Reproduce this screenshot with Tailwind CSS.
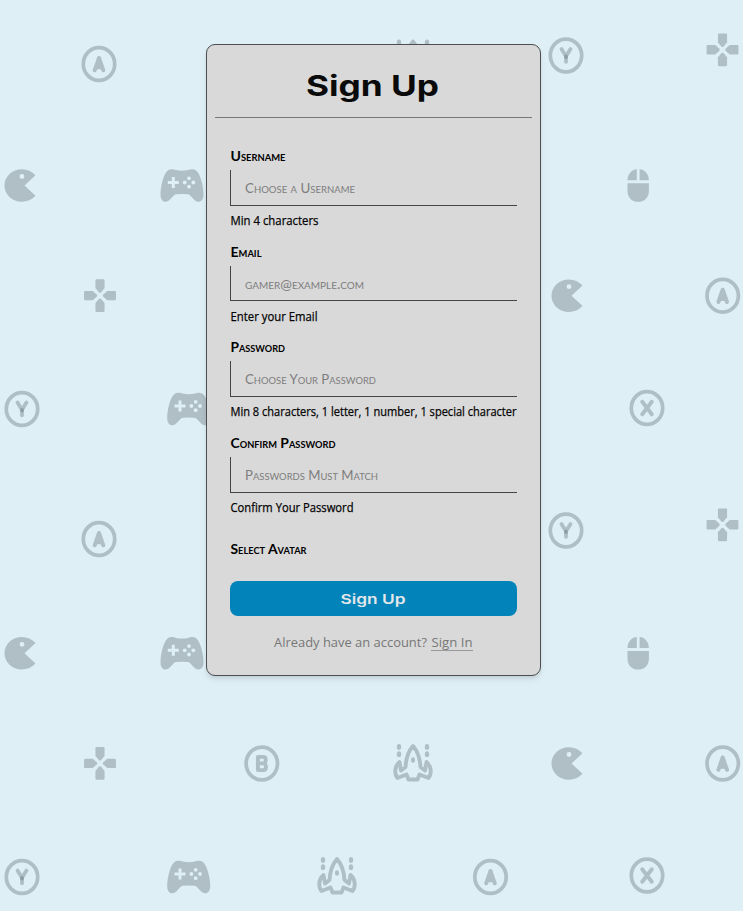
<!DOCTYPE html>
<html lang="en">
<head>
<meta charset="utf-8">
<title>Sign Up</title>
<script src="https://cdn.jsdelivr.net/npm/@tailwindcss/browser@4"></script>
</head>
<body class="relative h-[911px] overflow-hidden bg-[#deeff6] font-['Open_Sans','Noto_Sans',sans-serif] text-[#0a0a0a]">
<svg class="absolute inset-0" width="743" height="911" viewBox="0 0 743 911" fill="#b0bfc6" aria-hidden="true">
  <defs>
    <g id="ring"><ellipse rx="15.7" ry="16.4" fill="none" stroke="#b0bfc6" stroke-width="3.7"/></g>
    <g id="a"><use href="#ring"/><path d="M-4.3 6.3L0-6L4.3 6.3M-3 3.2H3M-1.5 0H1.5" fill="none" stroke="#b0bfc6" stroke-width="4" stroke-linecap="round" stroke-linejoin="round"/></g>
    <g id="b"><use href="#ring"/><path d="M-3.9-6.6H1.5Q4-6.6 4-3.7Q4-1 2-.2Q4.2 .8 4.2 3.4Q4.2 6.6 1.5 6.6H-3.9Z M-3.9-.1H2" fill="none" stroke="#b0bfc6" stroke-width="3.9" stroke-linejoin="round"/></g>
    <g id="x"><use href="#ring"/><path d="M-4.8-6.3L4.8 6.3M4.8-6.3L-4.8 6.3" fill="none" stroke="#b0bfc6" stroke-width="3.9" stroke-linecap="round"/></g>
    <g id="y"><use href="#ring"/><path d="M-4.5-6.5L0 .8L4.5-6.5M0 .8V6.3" fill="none" stroke="#b0bfc6" stroke-width="3.8" stroke-linecap="round" stroke-linejoin="round"/><ellipse cy="1.2" rx="1.8" ry="2.3" fill="#8e9da5"/></g>
    <g id="dpad"><g transform="scale(.97 1)"><path id="arm" d="M-4.7-15.2Q-4.7-16.4-3.5-16.4H3.500Q4.700-16.400 4.700-15.200V-7.500L1.200-3.400Q0-2.300-1.200-3.400L-4.700-7.500Z"/><use href="#arm" transform="rotate(90)"/><use href="#arm" transform="rotate(180)"/><use href="#arm" transform="rotate(270)"/></g></g>
    <path id="pac" fill-rule="evenodd" d="M15.500-10.300C12-14.200 7-16.300 2-16.300C-8-16.300-15.500-9-15.500 0S-8 16.300 2 16.300C7 16.300 12 14.200 15.500 10.300L4.500 0ZM2-11.400a2.400 2.400 0 1 1 0 4.800a2.400 2.400 0 1 1 0-4.800Z"/>
    <g id="pad"><path d="M-13.500-15.500C-11-17-8-16-6-15.400Q0-14.300 6-15.400C8-16 11-17 13.500-15.500C18-13 21.500 0 21.500 9C21.500 15 18.500 16.300 16 16.200C11.500 16 9.500 9 5.500 8.800Q0 8.200-5.500 8.800C-9.500 9-11.500 16-16 16.200C-18.500 16.300-21.500 15-21.500 9C-21.500 0-18 -13-13.500-15.500Z"/><path d="M-14.200-3H-3.200M-8.700-8.500V2.500" stroke="#deeff6" stroke-width="3"/><g fill="#deeff6"><circle cx="7" cy="-7.200" r="1.900"/><circle cx="7" cy="1.200" r="1.900"/><circle cx="2.700" cy="-3" r="1.900"/><circle cx="11.300" cy="-3" r="1.900"/></g></g>
    <path id="mouse" d="M-1.400-16.300V-5.200H-10.700C-10.700-11.300-6.700-15.800-1.400-16.300ZM1.400-16.300V-5.200H10.700C10.700-11.300 6.700-15.800 1.400-16.300ZM-10.700-2.200H10.700V5.200C10.700 12 6.500 16.300 0 16.300S-10.700 12-10.700 5.200Z"/>
    <g id="ship"><path d="M-7.500 4.500C-7-4-4-12 0-16.500C4-12 7-4 7.500 4.500L12 8L13.500-.5C18.500 4 19 11 15.500 15.500L6.500 12L4.500 17H-4.500L-6.500 12L-15.500 15.500C-19 11-18.500 4-13.500-.5L-12 8Z" fill="none" stroke="#b0bfc6" stroke-width="3.900" stroke-linejoin="round"/><ellipse cy="-2.500" rx="2" ry="2.800"/><ellipse cx="-14" cy="-15.600" rx="2.200" ry="2.900"/><ellipse cx="14" cy="-15.600" rx="2.200" ry="2.900"/><ellipse cx="-14" cy="-8.300" rx="2.200" ry="2.900"/><ellipse cx="14" cy="-8.300" rx="2.200" ry="2.900"/></g>
  </defs>
  <use href="#a" x="99" y="64"/><use href="#a" x="99" y="539"/><use href="#a" x="722.700" y="295.700"/><use href="#a" x="722.700" y="763.500"/><use href="#a" x="490.500" y="877"/>
  <use href="#b" x="261.800" y="763.500"/>
  <use href="#x" x="647" y="408"/><use href="#x" x="647" y="875.500"/>
  <use href="#y" x="566" y="55.500"/><use href="#y" x="566" y="530.500"/><use href="#y" x="22" y="409"/><use href="#y" x="22" y="877"/>
  <use href="#dpad" x="722.500" y="49.800"/><use href="#dpad" x="722.500" y="524.800"/><use href="#dpad" x="100" y="295.600"/><use href="#dpad" x="100" y="763.400"/>
  <use href="#pac" x="20" y="185.500"/><use href="#pac" x="20" y="653.300"/><use href="#pac" x="567" y="295.700"/><use href="#pac" x="567" y="763.500"/>
  <use href="#pad" x="182" y="185.500"/><use href="#pad" x="182" y="653.300"/><use href="#pad" x="188.700" y="409"/><use href="#pad" x="188.700" y="877"/>
  <use href="#mouse" x="638.200" y="185.500"/><use href="#mouse" x="638.200" y="653.300"/>
  <use href="#ship" x="413" y="58"/><use href="#ship" x="413" y="762.500"/><use href="#ship" x="337" y="875.500"/>
</svg>
<main class="relative ml-[206px] pt-[43.500px]">
  <section class="h-[632px] w-[334.500px] rounded-[9px] border border-[#4c4e50] bg-[#d9d9d9] px-2 shadow-md">
    <header class="flex h-[73px] items-center justify-center border-b border-[#777] pt-2">
      <svg width="136" height="44" viewBox="0 0 136 44" class="mt-0.5 overflow-visible"><text x="1" y="32" textLength="133" lengthAdjust="spacingAndGlyphs" class="fill-[#0a0a0a] font-['Inter',sans-serif] text-[29px] font-bold">Sign Up</text></svg>
    </header>
    <form class="flex flex-col px-[15px] pt-[28.500px]">
      <div class="h-[95.700px]">
        <label class="block h-6 text-[12px] leading-5"><svg class="overflow-visible" width="287" height="20"><text x=".5" y="15" textLength="55" lengthAdjust="spacingAndGlyphs" class="font-['Lato',sans-serif] text-[13.500px] font-bold [font-variant:small-caps]">Username</text></svg></label>
        <div class="h-[35.500px] border-b border-l border-[#444] pl-[14px]"><svg width="250" height="34"><text x="0" y="22.500" textLength="110" lengthAdjust="spacingAndGlyphs" class="fill-[#7d7d7d] font-['Lato',sans-serif] text-[14px] [font-variant:small-caps]">Choose a Username</text></svg></div>
        <p class="mt-[5.500px]"><svg class="overflow-visible" width="287" height="20"><text x=".5" y="14" textLength="88" lengthAdjust="spacingAndGlyphs" class="stroke-[#0a0a0a] text-[12px]" stroke-width=".25">Min 4 characters</text></svg></p>
      </div>
      <div class="h-[95.700px]">
        <label class="block h-6 text-[12px] leading-5"><svg class="overflow-visible" width="287" height="20"><text x=".5" y="14.500" textLength="31" lengthAdjust="spacingAndGlyphs" class="font-['Lato',sans-serif] text-[13.500px] font-bold [font-variant:small-caps]">Email</text></svg></label>
        <div class="h-[35.500px] border-b border-l border-[#444] pl-[14px]"><svg width="250" height="34"><text x="0" y="22.500" textLength="119" lengthAdjust="spacingAndGlyphs" class="fill-[#7d7d7d] font-['Lato',sans-serif] text-[14px] [font-variant:small-caps]">gamer@example.com</text></svg></div>
        <p class="mt-[5.500px]"><svg class="overflow-visible" width="287" height="20"><text x=".5" y="14" textLength="87" lengthAdjust="spacingAndGlyphs" class="stroke-[#0a0a0a] text-[12px]" stroke-width=".25">Enter your Email</text></svg></p>
      </div>
      <div class="h-[95.700px]">
        <label class="block h-6 text-[12px] leading-5"><svg class="overflow-visible" width="287" height="20"><text x=".5" y="15" textLength="54.500" lengthAdjust="spacingAndGlyphs" class="font-['Lato',sans-serif] text-[13.500px] font-bold [font-variant:small-caps]">Password</text></svg></label>
        <div class="h-[35.500px] border-b border-l border-[#444] pl-[14px]"><svg width="250" height="34"><text x="0" y="23" textLength="131" lengthAdjust="spacingAndGlyphs" class="fill-[#7d7d7d] font-['Lato',sans-serif] text-[14px] [font-variant:small-caps]">Choose Your Password</text></svg></div>
        <p class="mt-[5.500px]"><svg class="overflow-visible" width="288" height="20"><text x=".5" y="14" textLength="286" lengthAdjust="spacingAndGlyphs" class="stroke-[#0a0a0a] text-[12px]" stroke-width=".25">Min 8 characters, 1 letter, 1 number, 1 special character</text></svg></p>
      </div>
      <div class="h-[95.700px]">
        <label class="block h-6 text-[12px] leading-5"><svg class="overflow-visible" width="287" height="20"><text x=".5" y="15" textLength="105" lengthAdjust="spacingAndGlyphs" class="font-['Lato',sans-serif] text-[13.500px] font-bold [font-variant:small-caps]">Confirm Password</text></svg></label>
        <div class="h-[35.500px] border-b border-l border-[#444] pl-[14px]"><svg width="250" height="34"><text x="0" y="22.500" textLength="133" lengthAdjust="spacingAndGlyphs" class="fill-[#7d7d7d] font-['Lato',sans-serif] text-[14px] [font-variant:small-caps]">Passwords Must Match</text></svg></div>
        <p class="mt-[5.500px]"><svg class="overflow-visible" width="287" height="20"><text x=".5" y="14" textLength="123" lengthAdjust="spacingAndGlyphs" class="stroke-[#0a0a0a] text-[12px]" stroke-width=".25">Confirm Your Password</text></svg></p>
      </div>
      <div class="mt-[10px] h-[42.500px]"><svg class="overflow-visible" width="287" height="20"><text x=".5" y="15" textLength="76" lengthAdjust="spacingAndGlyphs" class="font-['Lato',sans-serif] text-[13.500px] font-bold [font-variant:small-caps]">Select Avatar</text></svg></div>
      <button type="button" class="flex h-[34.500px] items-center justify-center rounded-lg bg-[#0284bb]"><svg width="67" height="24"><text x=".5" y="16.500" textLength="65" lengthAdjust="spacingAndGlyphs" class="fill-[#e3e8ea] font-['Inter',sans-serif] text-[13.500px] font-semibold">Sign Up</text></svg></button>
      <p class="mt-[15px] flex pl-[44px]"><svg class="overflow-visible" width="157" height="24"><text x="0" y="16" textLength="153" lengthAdjust="spacingAndGlyphs" class="fill-[#777] text-[13.500px]">Already have an account?</text></svg><a href="#" class="h-[20.500px] border-b border-[#999]"><svg class="overflow-visible" width="42" height="20"><text x=".5" y="16" textLength="41" lengthAdjust="spacingAndGlyphs" class="fill-[#777] text-[13.500px]">Sign In</text></svg></a></p>
    </form>
  </section>
</main>
</body>
</html>
